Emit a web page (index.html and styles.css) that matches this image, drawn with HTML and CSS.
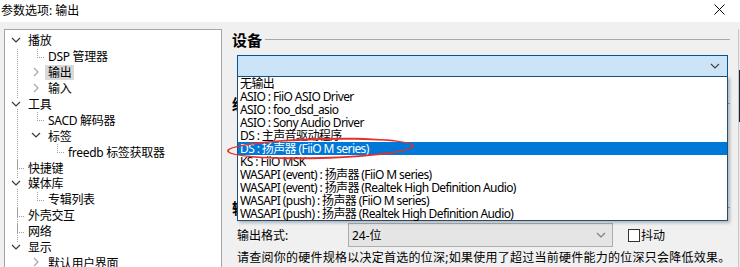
FILE: index.html
```html
<!DOCTYPE html>
<html lang="zh-CN">
<head>
    <meta charset="UTF-8">
    <meta name="viewport" content="width=device-width, initial-scale=1.0">
    <title>参数选项: 输出</title>
    <link rel="stylesheet" href="styles.css">
</head>
<body>
    <div class="window">
        <div class="titlebar">
            <span class="title">参数选项: 输出</span>
            <svg class="close" width="11" height="11" viewBox="0 0 11 11">
                <path d="M0.5 0.5 L10.5 10.5 M10.5 0.5 L0.5 10.5" stroke="#000" stroke-width="1" fill="none"/>
            </svg>
        </div>

        <div class="body">
            <ul class="tree">
                <li class="row"><i class="twisty"><svg class="open" viewBox="0 0 10 10"><path d="M1 3 L5 7 L9 3"/></svg></i><span class="label">播放</span></li>
                <li class="row"><i class="guide"></i><i class="twisty elbow"></i><span class="label">DSP 管理器</span></li>
                <li class="row"><i class="guide"></i><i class="twisty"><svg class="shut" viewBox="0 0 10 10"><path d="M3 1 L7 5 L3 9"/></svg></i><span class="label selected">输出</span></li>
                <li class="row"><i class="guide"></i><i class="twisty"><svg class="shut" viewBox="0 0 10 10"><path d="M3 1 L7 5 L3 9"/></svg></i><span class="label">输入</span></li>
                <li class="row"><i class="twisty"><svg class="open" viewBox="0 0 10 10"><path d="M1 3 L5 7 L9 3"/></svg></i><span class="label">工具</span></li>
                <li class="row"><i class="guide"></i><i class="twisty elbow"></i><span class="label">SACD 解码器</span></li>
                <li class="row"><i class="guide"></i><i class="twisty"><svg class="open" viewBox="0 0 10 10"><path d="M1 3 L5 7 L9 3"/></svg></i><span class="label">标签</span></li>
                <li class="row"><i class="guide"></i><i class="guide"></i><i class="twisty elbow"></i><span class="label">freedb 标签获取器</span></li>
                <li class="row"><i class="twisty elbow"></i><span class="label">快捷键</span></li>
                <li class="row"><i class="twisty"><svg class="open" viewBox="0 0 10 10"><path d="M1 3 L5 7 L9 3"/></svg></i><span class="label">媒体库</span></li>
                <li class="row"><i class="guide"></i><i class="twisty elbow"></i><span class="label">专辑列表</span></li>
                <li class="row"><i class="twisty elbow"></i><span class="label">外壳交互</span></li>
                <li class="row"><i class="twisty elbow"></i><span class="label">网络</span></li>
                <li class="row"><i class="twisty"><svg class="open" viewBox="0 0 10 10"><path d="M1 3 L5 7 L9 3"/></svg></i><span class="label">显示</span></li>
                <li class="row"><i class="guide"></i><i class="twisty"><svg class="shut" viewBox="0 0 10 10"><path d="M3 1 L7 5 L3 9"/></svg></i><span class="label">默认用户界面</span></li>
            </ul>

            <div class="panel">
                <div class="group">
                    <h2 class="group-title">设备</h2>
                    <div class="combo-wrap">
                        <div class="combo device">
                            <span class="combo-value"></span>
                            <svg class="arrow" viewBox="0 0 10 6"><path d="M1 1 L5 5 L9 1"/></svg>
                        </div>
                        <ul class="dropdown">
                            <li>无输出</li>
                            <li>ASIO : FiiO ASIO Driver</li>
                            <li>ASIO : foo_dsd_asio</li>
                            <li>ASIO : Sony Audio Driver</li>
                            <li>DS : 主声音驱动程序</li>
                            <li class="picked">DS : 扬声器 (FiiO M series)</li>
                            <li>KS : FiiO MSK</li>
                            <li>WASAPI (event) : 扬声器 (FiiO M series)</li>
                            <li>WASAPI (event) : 扬声器 (Realtek High Definition Audio)</li>
                            <li>WASAPI (push) : 扬声器 (FiiO M series)</li>
                            <li>WASAPI (push) : 扬声器 (Realtek High Definition Audio)</li>
                            <li class="mark"></li>
                        </ul>
                    </div>
                </div>

                <div class="group">
                    <h2 class="group-title">缓冲区长度</h2>
                    <div class="group-space"></div>
                </div>

                <div class="group">
                    <h2 class="group-title">输出</h2>
                    <div class="format-row">
                        <span class="format-label">输出格式:</span>
                        <div class="combo format">
                            <span class="combo-value">24-位</span>
                            <svg class="arrow" viewBox="0 0 10 6"><path d="M1 1 L5 5 L9 1"/></svg>
                        </div>
                        <label class="check"><span class="box"></span>抖动</label>
                    </div>
                    <p class="note">请查阅你的硬件规格以决定首选的位深;如果使用了超过当前硬件能力的位深只会降低效果。</p>
                </div>
            </div>

            <div class="edge"></div>
        </div>
    </div>
</body>
</html>
```

FILE: styles.css
```css
*{
    box-sizing: border-box;
}
body{
    margin: 0px;
    height: 267px;
    overflow: hidden;
    background-color: white;
    font-family: "Noto Sans", "Noto Sans CJK SC", sans-serif;
    font-size: 12px;
    color: black;
}
.window{
    width: 740px;
    height: 267px;
    display: flex;
    flex-direction: column;
}
.titlebar{
    height: 22px;
    flex: none;
    display: flex;
    align-items: center;
    justify-content: space-between;
    padding: 0px 15px 0px 1px;
}
.title{
    line-height: 16px;
}
.close{
    margin-top: -3px;
}
.body{
    flex: 1;
    display: flex;
    background-color: #f0f0f0;
    padding: 7px 0px 0px 4px;
    min-height: 0;
}

/* tree */
.tree{
    width: 218px;
    flex: none;
    margin: 0px;
    padding: 3px 0px 0px 3px;
    list-style: none;
    background-color: white;
    border: 1px solid #a5a5a5;
    border-bottom: none;
    background-image: repeating-linear-gradient(to bottom, #a0a0a0 0px 1px, transparent 1px 2px);
    background-repeat: no-repeat;
    background-position: 12px 19px;
    background-size: 1px 199px;
    letter-spacing: -0.3px;
}
.row{
    height: 15.9px;
    display: flex;
    align-items: center;
    white-space: nowrap;
}
.guide{
    width: 20px;
    height: 16px;
    flex: none;
}
.twisty{
    width: 17px;
    height: 16px;
    flex: none;
    display: flex;
    align-items: center;
}
.twisty svg{
    width: 10px;
    height: 10px;
    margin: -2px 0px 0px 3px;
    background-color: white;
    fill: none;
    stroke-width: 1.2;
}
.twisty .open{
    stroke: #3a3a3a;
}
.twisty .shut{
    stroke: #a8a8a8;
}
.elbow{
    background-image:
        repeating-linear-gradient(to bottom, #a0a0a0 0px 1px, transparent 1px 2px),
        repeating-linear-gradient(to right, #a0a0a0 0px 1px, transparent 1px 2px);
    background-repeat: no-repeat;
    background-position: 9px 0px, 9px 8px;
    background-size: 1px 8px, 8px 1px;
}
.label{
    padding: 0px 3px;
    line-height: 15px;
}
.selected{
    background-color: #d9d9d9;
}

/* right side */
.panel{
    flex: 1;
    padding: 2px 8px 0px 10px;
}
.group-title{
    margin: 0px;
    display: flex;
    align-items: center;
    gap: 3px;
    font-size: 15px;
    line-height: 18px;
    font-weight: bold;
}
.group-title::after{
    content: "";
    flex: 1;
    border-top: 1px solid #a8a8a8;
    margin-top: -1px;
}
.combo-wrap{
    position: relative;
    width: 491px;
    margin: 6px 0px 0px 5px;
}
.combo{
    display: flex;
    align-items: center;
    justify-content: space-between;
    border: 1px solid;
}
.combo .arrow{
    width: 10px;
    height: 6px;
    fill: none;
    stroke-width: 1.1;
}
.device{
    height: 22px;
    background-color: #cce4f7;
    border-color: #005499;
    padding-right: 7px;
}
.device .arrow{
    stroke: #404040;
}
.dropdown{
    position: absolute;
    left: 0px;
    top: 21px;
    width: 491px;
    height: 145px;
    margin: 0px;
    padding: 0px;
    list-style: none;
    background-color: white;
    border: 1px solid #1e4e7a;
    box-shadow: 2px 2px 3px rgba(0, 0, 0, 0.25);
    z-index: 2;
}
.dropdown li{
    height: 13px;
    line-height: 13px;
    padding-left: 2px;
    white-space: nowrap;
    letter-spacing: -0.6px;
}
.dropdown .picked{
    background-color: #0078d7;
    color: white;
}
.dropdown .mark{
    position: absolute;
    left: -11px;
    top: 61px;
    width: 187px;
    height: 21px;
    border: 2.5px solid #e3302c;
    border-radius: 50%;
    transform: rotate(-1.5deg);
    padding: 0px;
}
.group:nth-child(2) .group-title{
    margin-top: 18px;
}
.group-space{
    height: 86px;
}
.format-row{
    display: flex;
    align-items: center;
    margin: 6px 0px 0px 5px;
    height: 24px;
}
.format-label{
    width: 111px;
}
.format{
    width: 265px;
    height: 24px;
    background-color: #e5e5e5;
    border-color: #adadad;
    padding: 0px 6px 0px 3px;
}
.format .arrow{
    stroke: #7a7a7a;
}
.check{
    display: flex;
    align-items: center;
    margin-left: 15px;
}
.box{
    width: 12px;
    height: 13px;
    border: 1px solid #333333;
    background-color: white;
    margin-right: 1px;
}
.note{
    margin: 3px 0px 0px 5px;
    line-height: 16px;
    white-space: nowrap;
    letter-spacing: 0.25px;
}
.edge{
    width: 4px;
    flex: none;
    border-left: 1px solid #c9c9c9;
    background: linear-gradient(to bottom, #e8e8e8 0px 41px, #14243a 41px 93px, #e8e8e8 93px);
}
```
